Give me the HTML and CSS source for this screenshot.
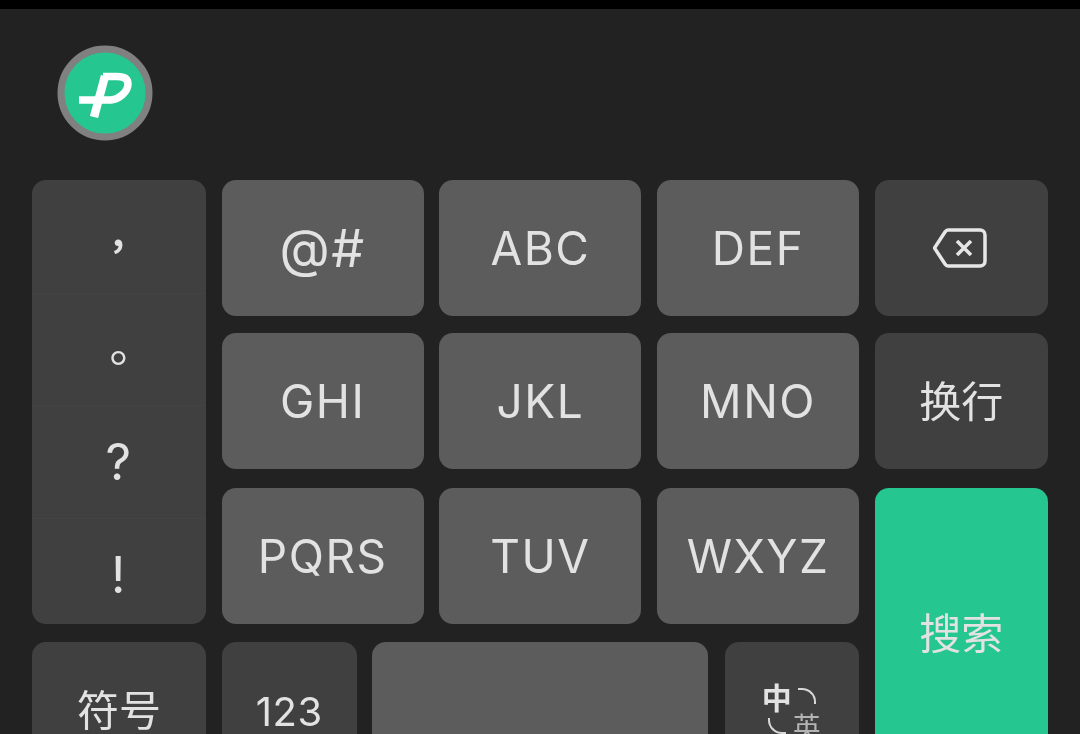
FILE: index.html
```html
<!DOCTYPE html>
<html lang="zh">
<head>
    <meta charset="UTF-8">
    <meta name="viewport" content="width=device-width, initial-scale=1.0">
    <title>Keyboard</title>
    <link rel="stylesheet" href="styles.css">
</head>
<body>
    <div class="status"></div>
    <div class="toolbar">
        <svg class="logo" width="96" height="96" viewBox="0 0 96 96">
            <circle cx="48" cy="48" r="44" fill="#25c690" stroke="#808080" stroke-width="7"/>
            <path d="M48 31 L37 72" fill="none" stroke="#fff" stroke-width="8.5"/>
            <path d="M22 55 H54 C63 54 71 46 71 39 C71 33 66 31.500 60 31.500 H46" fill="none" stroke="#fff" stroke-width="7.5"/>
        </svg>
    </div>
    <div class="keyboard">
        <div class="key punct">
            <div class="punct-cell comma">,</div>
            <div class="punct-cell period">。</div>
            <div class="punct-cell mark">?</div>
            <div class="punct-cell mark">!</div>
        </div>
        <div class="key light sym">@#</div>
        <div class="key light">ABC</div>
        <div class="key light">DEF</div>
        <div class="key">
            <svg width="56" height="44" viewBox="0 0 56 44">
                <path d="M15 4 H47 C50 4 52 6 52 9 V35 C52 38 50 40 47 40 H15 C14 40 13 39.5 12 38 L1.5 22 L12 6 C13 4.500 14 4 15 4 Z" fill="none" stroke="#e6e6e6" stroke-width="3.5" stroke-linejoin="round"/>
                <path d="M24 15 L38 29 M38 15 L24 29" fill="none" stroke="#e6e6e6" stroke-width="3.5"/>
            </svg>
        </div>
        <div class="key light">GHI</div>
        <div class="key light">JKL</div>
        <div class="key light">MNO</div>
        <div class="key cjk">换行</div>
        <div class="key light">PQRS</div>
        <div class="key light">TUV</div>
        <div class="key light">WXYZ</div>
        <div class="key search cjk">搜索</div>
        <div class="key cjk">符号</div>
        <div class="bottom-row">
            <div class="key num">123</div>
            <div class="key light space"></div>
            <div class="key lang">
                <span class="lang-zh">中</span>
                <span class="arc arc-top"></span>
                <span class="arc arc-bottom"></span>
                <span class="lang-en">英</span>
            </div>
        </div>
    </div>
</body>
</html>
```

FILE: styles.css
```css
html, body {
    height: 734px;
    overflow: hidden;
}
body {
    margin: 0;
    background-color: #222;
    color: #e2e2e2;
    font-family: 'Inter', 'Noto Sans CJK SC', sans-serif;
}
.status {
    height: 9px;
    background-color: #000;
}
.toolbar {
    height: 171px;
    padding: 36px 0 0 56.5px;
    box-sizing: border-box;
    filter: blur(0.6px);
}
.logo {
    display: block;
}
.keyboard {
    display: grid;
    grid-template-columns: 174px 202px 202px 202px 173px;
    grid-template-rows: 136px 138px 137px 136px;
    column-gap: 15.7px;
    row-gap: 17px;
    padding-left: 32px;
    filter: blur(0.6px);
}
.key {
    display: flex;
    align-items: center;
    justify-content: center;
    box-sizing: border-box;
    height: 136px;
    background-color: #404040;
    border-radius: 14px;
    font-size: 46px;
    letter-spacing: 1.5px;
}
.light {
    background-color: #5c5c5c;
}
.sym {
    font-size: 52px;
}
.cjk {
    padding-bottom: 5px;
    font-family: 'Noto Sans CJK SC', sans-serif;
    font-size: 42px;
    letter-spacing: 0;
}
.punct {
    grid-row: span 3;
    height: 444px;
    flex-direction: column;
    align-items: stretch;
}
.punct-cell {
    flex: 0 0 112.5px;
    display: flex;
    align-items: center;
    justify-content: center;
    box-sizing: border-box;
    border-top: 1px solid #444;
}
.punct-cell:first-child {
    border-top: none;
}
.punct-cell:last-child {
    flex: 1;
    padding-top: 8px;
}
.mark {
    font-size: 50px;
}
.comma {
    font-family: 'Noto Sans CJK TC', sans-serif;
    font-size: 38px;
    font-weight: 700;
    padding-bottom: 14px;
}
.period {
    font-family: 'Noto Sans CJK TC', sans-serif;
    font-size: 46px;
    padding-top: 12px;
}
.search {
    grid-column: 5;
    grid-row: span 2;
    height: 100%;
    background-color: #25c690;
}
.bottom-row {
    grid-column: span 3;
    display: flex;
    gap: 15px;
}
.num {
    width: 135px;
    font-size: 40px;
    letter-spacing: 0.5px;
    padding-top: 3px;
}
.space {
    width: 336px;
    margin-right: 2px;
}
.lang {
    width: 134px;
    display: grid;
    grid-template-columns: 30px 30px;
    grid-template-rows: 30px 30px;
    justify-content: center;
    align-content: start;
    justify-items: center;
    align-items: center;
    padding-top: 39px;
    font-family: 'Noto Sans CJK SC', sans-serif;
    letter-spacing: 0;
}
.lang-zh {
    font-size: 30px;
    font-weight: 700;
}
.lang-en {
    font-size: 28px;
    color: #b4b4b4;
}
.arc {
    width: 16px;
    height: 14px;
    border: 0 solid #d8d8d8;
}
.arc-top {
    border-top-width: 2.5px;
    border-right-width: 2.5px;
    border-top-right-radius: 14px;
}
.arc-bottom {
    border-bottom-width: 2.5px;
    border-left-width: 2.5px;
    border-bottom-left-radius: 14px;
}
```
